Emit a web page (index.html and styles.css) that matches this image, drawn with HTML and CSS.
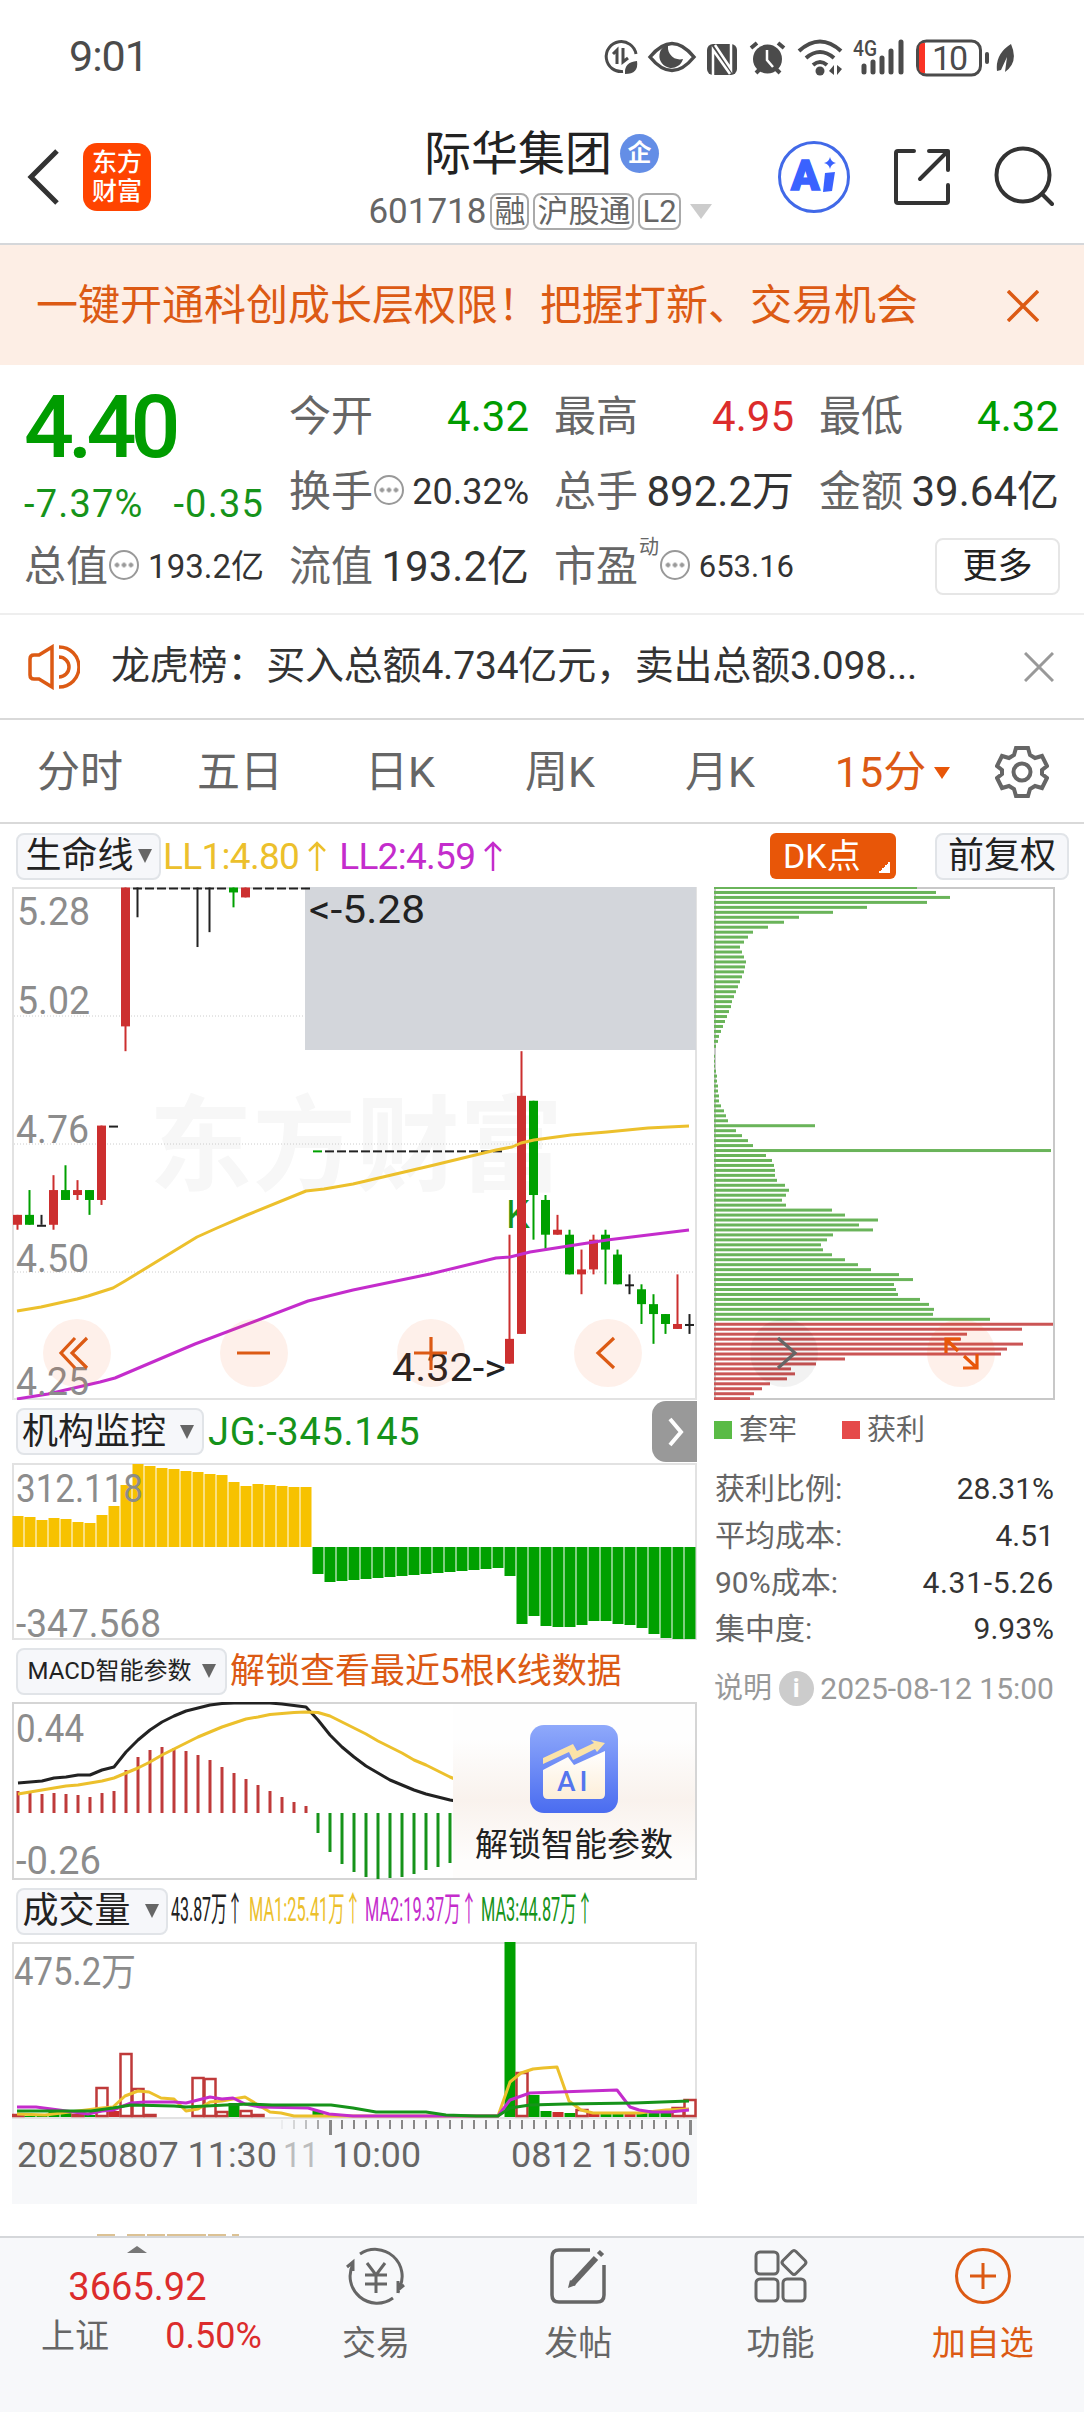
FILE: index.html
```html
<!DOCTYPE html>
<html lang="zh-CN">
<head>
  <meta charset="UTF-8">
  <meta name="viewport" content="width=device-width, initial-scale=1">
  <title>际华集团 601718</title>
  <link rel="stylesheet" href="styles.css">
</head>
<body>
  <div class="status-bar">
    <span class="time">9:01</span>
    <svg class="status-icons" width="414" height="40" viewBox="0 0 414 40">
      <g fill="none" stroke="#4b4b4b" stroke-width="3">
        <path d="M20 34.500A15 15 0 1 1 33 17"/>
        <path d="M10 17l4-4v14M20 11v14l5-4"/>
        <path d="M47 20Q69-7 91 20Q69 47 47 20z" stroke-width="3.500"/>
        <path d="M148 11l6-5M181 11l-6-5M153 36l5-5M177 36l-5-5" stroke-width="4"/>
        <path d="M196 14q21-19 42 0M203 21q14-12 28 0M210 28q7-6 14 0" stroke-width="4"/>
        <path d="M261 29v6M270 25v10M279 21v14M288 14v21M298 5v30" stroke-width="5" stroke-linecap="round"/>
        <rect x="314.500" y="4" width="63" height="34" rx="9"/>
        <path d="M384 17v8" stroke-width="4" stroke-linecap="round"/>
      </g>
      <g fill="#4b4b4b">
        <path d="M22 37q-1-12 12-13q2 13-12 13z"/>
        <path d="M69 7a12 12 0 1 0 11 15a12 12 0 0 1-15-13z"/>
        <rect x="104" y="7" width="30" height="31" rx="6"/>
        <circle cx="164.500" cy="22" r="14.500"/>
        <circle cx="217" cy="34" r="4.500"/>
        <path d="M226 34l5-6v10zM239 32l-5 6V28z"/>
        <path d="M394 34q-2-17 14-27q8 18-6 28l2-15l-6 13z"/>
      </g>
      <g fill="none" stroke="#fff" stroke-width="2.500">
        <path d="M110 38V13l17 24M128 7v25L112 8"/>
        <path d="M164 13v10l6 7"/>
      </g>
      <path d="M322 6h-1q-5 0-5 5v20q0 5 5 5h1z" fill="#fa3325"/>
      <text x="329" y="33" class="battery-text">10</text>
      <text x="250" y="19" class="network-text" textLength="24" lengthAdjust="spacingAndGlyphs">4G</text>
    </svg>
  </div>

  <header class="header">
    <div class="header-left">
      <svg width="34" height="58" viewBox="0 0 34 58"><path d="M31 3L5 29l26 26" fill="none" stroke="#333" stroke-width="5"/></svg>
      <div class="logo">东方<br>财富</div>
    </div>
    <div class="header-title">
      <h1>际华集团<span class="badge">企</span></h1>
      <div class="sub">
        <span class="code">601718</span><span class="tag">融</span><span class="tag">沪股通</span><span class="tag">L2</span><span class="caret light"></span>
      </div>
    </div>
    <div class="header-right">
      <svg width="72" height="72" viewBox="0 0 72 72">
        <circle cx="36" cy="36" r="34.500" fill="none" stroke="#4169e8" stroke-width="3"/>
        <text x="13" y="49" class="ai-text">A</text>
        <path d="M47 32l10-1-3 19-9 1z" fill="#3a62ff"/>
        <path d="M52 16q1 5 6 6-5 1-6 6-1-5-6-6 5-1 6-6z" fill="#3a62ff"/>
      </svg>
      <svg width="58" height="58" viewBox="0 0 58 58" fill="none" stroke="#333" stroke-width="4" stroke-linecap="round" stroke-linejoin="round">
        <path d="M21 3H5q-2 0-2 2v48q0 2 2 2h48q2 0 2-2V37M36 3h19v19M55 3L27 31"/>
      </svg>
      <svg width="60" height="62" viewBox="0 0 60 62" fill="none" stroke="#333" stroke-width="4" stroke-linecap="round">
        <circle cx="29" cy="29" r="26.500"/><path d="M48 48l10 10"/>
      </svg>
    </div>
  </header>

  <div class="banner">
    <span>一键开通科创成长层权限！把握打新、交易机会</span>
    <svg width="32" height="32" viewBox="0 0 32 32"><path d="M1 1l30 30M31 1L1 31" stroke="#dc5a14" stroke-width="3.500"/></svg>
  </div>

  <section class="quote">
    <div class="price-box">
      <div class="price">4.40</div>
      <div class="change"><span>-7.37%</span><span>-0.35</span></div>
    </div>
    <div class="cell"><span>今开</span><b class="green">4.32</b></div>
    <div class="cell"><span>最高</span><b class="red">4.95</b></div>
    <div class="cell"><span>最低</span><b class="green">4.32</b></div>
    <div class="cell"><span>换手<i class="more-dot"></i></span><b class="mid">20.32%</b></div>
    <div class="cell"><span>总手</span><b>892.2万</b></div>
    <div class="cell"><span>金额</span><b>39.64亿</b></div>
    <div class="cell"><span>总值<i class="more-dot"></i></span><b class="small">193.2亿</b></div>
    <div class="cell"><span>流值</span><b>193.2亿</b></div>
    <div class="cell"><span>市盈<sup>动</sup><i class="more-dot"></i></span><b class="xsmall">653.16</b></div>
    <div class="cell end"><button class="more-btn">更多</button></div>
  </section>

  <div class="news">
    <svg width="52" height="46" viewBox="0 0 52 46" fill="none" stroke="#dc5a14" stroke-width="3.500">
      <path d="M24 3v40L11 35H6q-4 0-4-4V15q0-4 4-4h5zM31 13a10 10 0 0 1 0 20M31 3a20 20 0 0 1 0 40"/>
    </svg>
    <span class="news-text">龙虎榜：买入总额4.734亿元，卖出总额3.098...</span>
    <svg width="30" height="30" viewBox="0 0 30 30"><path d="M1 1l28 28M29 1L1 29" stroke="#999" stroke-width="3"/></svg>
  </div>

  <nav class="tabs">
    <span>分时</span><span>五日</span><span>日K</span><span>周K</span><span>月K</span>
    <span class="active">15分<i class="caret orange"></i></span>
    <svg width="54" height="54" viewBox="0 0 54 54" fill="none" stroke="#666" stroke-width="4">
      <path d="M21 3h12l2 7 5 3 7-2 5 10-5 4v4l5 4-5 10-7-2-5 3-2 7H21l-2-7-5-3-7 2-5-10 5-4v-4l-5-4 5-10 7 2 5-3z"/>
      <circle cx="27" cy="27" r="8.500"/>
    </svg>
  </nav>

  <main class="board">
    <div class="board-left">
      <div class="row">
        <button class="select s1">生命线<i class="caret"></i></button>
        <span class="ind yellow">LL1:4.80</span><svg class="arrow yellow" viewBox="0 0 20 32"><path d="M10 31V3M2 11l8-8 8 8"/></svg>
        <span class="ind purple gap">LL2:4.59</span><svg class="arrow purple" viewBox="0 0 20 32"><path d="M10 31V3M2 11l8-8 8 8"/></svg>
      </div>
      <svg id="kline" width="685" height="513" viewBox="0 0 685 513"></svg>

      <div class="row">
        <button class="select s2">机构监控<i class="caret"></i></button>
        <span class="ind green">JG:-345.145</span>
        <span class="side-tab"><svg width="16" height="30" viewBox="0 0 16 30"><path d="M2 2l11 13L2 28" fill="none" stroke="#fff" stroke-width="4"/></svg></span>
      </div>
      <svg id="jg" width="685" height="177" viewBox="0 0 685 177"></svg>

      <div class="row">
        <button class="select s3">MACD智能参数<i class="caret"></i></button>
        <span class="unlock">解锁查看最近5根K线数据</span>
      </div>
      <div class="macd">
        <svg id="macd" width="685" height="178" viewBox="0 0 685 178"></svg>
        <div class="lock-card">
          <svg width="88" height="88" viewBox="0 0 88 88">
            <defs>
              <linearGradient id="blue" x2="0" y2="1"><stop offset="0" stop-color="#8fa9fb"/><stop offset="1" stop-color="#4a6cf0"/></linearGradient>
              <linearGradient id="cream" x2="0" y2="1"><stop offset="0" stop-color="#fff"/><stop offset="1" stop-color="#fdeed8"/></linearGradient>
            </defs>
            <rect width="88" height="88" rx="14" fill="url(#blue)"/>
            <path d="M13 45l25-13 6 8 31-14v43q0 5-5 5H18q-5 0-5-5z" fill="url(#cream)"/>
            <path d="M13 33l30-14 4 7 17-8-3-3 14 3-8 9-2-3-22 11-4-8-26 12z" fill="#fbe3a8"/>
            <text x="27" y="66" class="card-ai">AI</text>
          </svg>
          <span>解锁智能参数</span>
        </div>
      </div>

      <div class="row">
        <button class="select s4">成交量<i class="caret"></i></button>
        <svg width="425" height="40" viewBox="0 0 425 40" class="ma-text">
          <text x="0" y="30" textLength="72" lengthAdjust="spacingAndGlyphs" fill="#222">43.87万↑</text>
          <text x="78" y="30" textLength="112" lengthAdjust="spacingAndGlyphs" fill="#ecc02c">MA1:25.41万↑</text>
          <text x="194" y="30" textLength="112" lengthAdjust="spacingAndGlyphs" fill="#c42ccc">MA2:19.37万↑</text>
          <text x="310" y="30" textLength="112" lengthAdjust="spacingAndGlyphs" fill="#16931a">MA3:44.87万↑</text>
        </svg>
      </div>
      <svg id="volume" width="685" height="262" viewBox="0 0 685 262"></svg>
    </div>

    <div class="board-right">
      <div class="row right">
        <button class="dk">DK点</button>
        <button class="select fq">前复权</button>
      </div>
      <svg id="chips" width="341" height="513" viewBox="0 0 341 513"></svg>
      <div class="legend"><i class="sq g"></i>套牢<i class="sq r"></i>获利</div>
      <dl class="stats">
        <div><dt>获利比例:</dt><dd>28.31%</dd></div>
        <div><dt>平均成本:</dt><dd>4.51</dd></div>
        <div><dt>90%成本:</dt><dd class="range">4.31-5.26</dd></div>
        <div><dt>集中度:</dt><dd>9.93%</dd></div>
      </dl>
      <div class="note"><span>说明</span><i>i</i><span class="date">2025-08-12 15:00</span></div>
    </div>
  </main>

  <div class="peek"><i></i><i></i><i></i><i></i><i></i><i></i></div>

  <footer class="bottom">
    <div class="index">
      <i class="caret up"></i>
      <div class="index-val">3665.92</div>
      <div class="index-row"><span>上证</span><b>0.50%</b></div>
    </div>
    <div class="item">
      <svg width="66" height="60" viewBox="0 0 66 60" fill="none" stroke="#666" stroke-width="3">
        <path d="M17 8a27 27 0 0 1 39 35l-1 4M61 39l-6 5v-9M50 52A27 27 0 0 1 10 18M4 21l6-5v9"/>
        <path d="M24 17l9 12 9-12M22 29h22M22 38h22M33 29v18"/>
      </svg>
      <span>交易</span>
    </div>
    <div class="item">
      <svg width="60" height="60" viewBox="0 0 60 60" fill="none" stroke="#666" stroke-width="3.500">
        <path d="M42 4H11q-7 0-7 7v38q0 7 7 7h38q7 0 7-7V19"/>
        <path d="M24 38L48 12" stroke-width="6"/><path d="M51 9l3-3" stroke-width="6"/><path d="M20 42l8-3-6-5z" fill="#666" stroke="none"/>
      </svg>
      <span>发帖</span>
    </div>
    <div class="item">
      <svg width="60" height="60" viewBox="0 0 60 60" fill="none" stroke="#666" stroke-width="3">
        <rect x="5" y="6" width="22" height="22" rx="4"/><rect x="5" y="33" width="22" height="22" rx="4"/><rect x="32" y="33" width="22" height="22" rx="4"/>
        <path d="M41 5.500q2-2 4 0l9 9q2 2 0 4l-9 9q-2 2-4 0l-9-9q-2-2 0-4z"/>
      </svg>
      <span>功能</span>
    </div>
    <div class="item active">
      <svg width="60" height="60" viewBox="0 0 60 60" fill="none" stroke="#dc5a14" stroke-width="3">
        <circle cx="30" cy="30" r="26.500"/><path d="M30 17v26M17 30h26"/>
      </svg>
      <span>加自选</span>
    </div>
  </footer>
  <script src="chart.js"></script>
</body>
</html>
```

FILE: styles.css
```css
* {
  box-sizing: border-box;
}

body {
  margin: 0;
  width: 1084px;
  height: 2412px;
  overflow: hidden;
  display: flex;
  flex-direction: column;
  background: #fff;
  color: #333;
  font-family: Roboto, "Noto Sans CJK SC", sans-serif;
  font-size: 42px;
  line-height: 1;
  font-weight: 400;
}

svg {
  display: block;
  flex: none;
}

svg text {
  font-family: Roboto, "Noto Sans CJK SC", sans-serif;
}

i {
  font-style: normal;
}

button {
  font: inherit;
  color: #222;
  padding: 0;
  white-space: nowrap;
}

.green { color: #009c00; }
.red { color: #dc2c2c; }

/* status bar */
.status-bar {
  height: 109px;
  padding: 4px 67px 0 69px;
  display: flex;
  align-items: center;
  justify-content: space-between;
}

.time {
  font-size: 43px;
  color: #4b4b4b;
  letter-spacing: -1px;
}

.battery-text {
  font-size: 34px;
  fill: #4b4b4b;
  letter-spacing: -2px;
}

.network-text {
  font-size: 22px;
  font-weight: 500;
  fill: #4b4b4b;
}

/* header */
.header {
  height: 136px;
  border-bottom: 2px solid #d5d7da;
  display: grid;
  grid-template-columns: 1fr auto 1fr;
  align-items: center;
  padding: 2px 30px 0 26px;
}

.header-left {
  display: flex;
  align-items: center;
  gap: 23px;
}

.logo {
  width: 68px;
  height: 68px;
  border-radius: 14px;
  background: #ff4400;
  color: #fff;
  font-size: 25px;
  line-height: 29px;
  font-weight: 500;
  text-align: center;
  padding-top: 5px;
}

.header-title {
  display: flex;
  flex-direction: column;
  align-items: center;
  padding-top: 4px;
}

h1 {
  margin: 0 0 14px;
  font-size: 47px;
  line-height: 50px;
  font-weight: 400;
  color: #222;
  display: flex;
  align-items: center;
  gap: 8px;
  padding-left: 3px;
}

.badge {
  width: 39px;
  height: 39px;
  border-radius: 50%;
  background: #648ee6;
  color: #fff;
  font-size: 24px;
  line-height: 38px;
  font-weight: 700;
  text-align: center;
}

.sub {
  display: flex;
  align-items: center;
  gap: 4px;
  font-size: 35px;
  color: #666;
}

.tag {
  border: 2px solid #aaa;
  border-radius: 8px;
  height: 37px;
  padding: 0 2px;
  font-size: 31px;
  line-height: 33px;
}

.caret {
  width: 0;
  height: 0;
  border: 7px solid transparent;
  border-top: 14px solid #666;
  border-bottom: 0;
  display: inline-block;
}

.caret.light {
  border-width: 15px 11px 0;
  border-top-color: #ccc;
  margin-left: 5px;
}

.caret.orange {
  border-width: 12px 8px 0;
  border-top-color: #e85608;
  margin: 0 0 8px 8px;
}

.caret.up {
  border: 10px solid transparent;
  border-bottom: 7px solid #777;
  border-top: 0;
}

.header-right {
  display: flex;
  align-items: center;
  justify-content: flex-end;
  gap: 43px;
}

.ai-text {
  font-size: 42px;
  font-weight: 900;
  fill: #3a62ff;
  stroke: #3a62ff;
  stroke-width: 1.5px;
}

/* banner */
.banner {
  height: 120px;
  background: #fdeee5;
  color: #dc5a14;
  display: flex;
  align-items: center;
  justify-content: space-between;
  padding: 2px 45px 0 36px;
}

/* quote */
.quote {
  height: 250px;
  padding: 14px 24px 0 24px;
  border-bottom: 2px solid #eee;
  display: grid;
  grid-template-columns: repeat(4, 240px);
  grid-template-rows: repeat(3, 75px);
  column-gap: 25px;
}

.price-box {
  grid-row: span 2;
}

.price {
  font-size: 88px;
  line-height: 88px;
  font-weight: 500;
  letter-spacing: -6px;
  color: #009c00;
  padding-top: 4px;
  height: 106px;
}

.change {
  display: flex;
  justify-content: space-between;
  font-size: 38px;
  letter-spacing: 1.2px;
  color: #16931a;
}

.cell {
  display: flex;
  align-items: center;
  justify-content: space-between;
  white-space: nowrap;
}

.cell span {
  color: #666;
  display: flex;
  align-items: center;
}

.cell b {
  font-weight: 400;
}

.cell .mid { font-size: 36px; }
.cell .small { font-size: 33px; }
.cell .xsmall { font-size: 31px; }

.cell.end {
  justify-content: flex-end;
}

.cell.end .more-btn {
  margin-right: -1px;
}

.cell sup {
  font-size: 20px;
  align-self: flex-start;
  margin: -9px 0 0 1px;
}

.more-dot {
  width: 30px;
  height: 30px;
  margin: -4px 0 0 1px;
  border: 2px solid #999;
  border-radius: 50%;
  background: radial-gradient(circle, #999 2px, transparent 2.5px) center / 7px 7px content-box;
  padding: 9px 2px;
}

.more-btn {
  width: 125px;
  height: 57px;
  background: #fff;
  border: 2px solid #e6e6e6;
  border-radius: 8px;
  font-size: 35px;
}

/* news */
.news {
  height: 105px;
  border-bottom: 2px solid #d9d9d9;
  display: flex;
  align-items: center;
  padding: 0 30px 0 28px;
}

.news-text {
  flex: 1;
  margin-left: 31px;
  font-size: 39px;
  letter-spacing: -.2px;
}

/* tabs */
.tabs {
  height: 104px;
  border-bottom: 2px solid #d9d9d9;
  display: flex;
  align-items: center;
  color: #666;
  font-size: 43px;
  padding-top: 2px;
}

.tabs span {
  width: 160px;
  text-align: center;
}

.tabs .active {
  width: 185px;
  color: #dc5a14;
}

.tabs svg {
  margin-left: 10px;
}

/* board */
.board {
  height: 1411px;
  display: flex;
  gap: 17px;
  padding: 1px 0 0 12px;
}

.board-left {
  width: 685px;
}

.board-right {
  width: 355px;
}

.row {
  height: 62px;
  display: flex;
  align-items: center;
}

#kline + .row {
  height: 63px;
}

.select {
  height: 47px;
  margin-left: 4px;
  border: 2px solid #e1e4e8;
  border-radius: 8px;
  background: #f6f7fa;
  font-size: 36px;
  display: flex;
  align-items: center;
  justify-content: center;
  flex: none;
}

.s1 { width: 145px; gap: 4px; }
.s2 { width: 188px; gap: 14px; padding-right: 4px; }
.s3 { width: 211px; gap: 10px; font-size: 24px; }
.s4 { width: 152px; gap: 14px; padding-right: 3px; }
.fq { width: 134px; margin: 0; }

.ind {
  font-size: 37px;
  letter-spacing: -.7px;
  margin-left: 2px;
}

.gap { margin-left: 12px; }
.yellow { color: #ecc02c; stroke: #ecc02c; }
.purple { color: #c42ccc; stroke: #c42ccc; }
.ind.yellow, .ind.purple { stroke: none; }
.ind.green { margin-left: 4px; color: #16931a; font-size: 38px; letter-spacing: .7px; }

.arrow {
  width: 20px;
  height: 34px;
  margin-left: 8px;
  fill: none;
  stroke-width: 2.5;
}

.side-tab {
  width: 45px;
  height: 61px;
  margin-left: auto;
  background: #999;
  border-radius: 14px 0 0 14px;
  display: flex;
  align-items: center;
  padding-left: 16px;
}

.unlock {
  margin-left: 3px;
  font-size: 35px;
  color: #dc5a14;
}

.macd {
  position: relative;
}

.lock-card {
  position: absolute;
  top: 2px;
  right: 2px;
  width: 242px;
  height: 174px;
  background: linear-gradient(#fefefe 20%, #f9f2ed 55%, #fefdfc 90%);
  display: flex;
  flex-direction: column;
  align-items: center;
  padding-top: 21px;
  font-size: 33px;
  color: #222;
  gap: 15px;
}

.card-ai {
  font-size: 28px;
  font-weight: 500;
  letter-spacing: 4px;
  fill: #5575ee;
}

.ma-text {
  margin-left: 3px;
  font-size: 34px;
}

.right {
  justify-content: flex-end;
  gap: 39px;
}

.dk {
  width: 126px;
  height: 46px;
  border: 0;
  border-radius: 6px;
  background: linear-gradient(135deg, transparent 50%, #fff 50%) 108px 28px / 12px 12px no-repeat, #e85608;
  color: #fff;
  font-size: 34px;
  text-align: left;
  padding-left: 13px;
}

.legend {
  display: flex;
  align-items: center;
  height: 60px;
  font-size: 29px;
  color: #666;
}

.sq {
  width: 18px;
  height: 18px;
  margin-right: 7px;
}

.sq.g { background: #5abb46; }
.sq.r { background: #e54a4a; margin-left: 45px; }

.stats {
  margin: 6px 0 0 1px;
  width: 339px;
  font-size: 30px;
}

.stats div {
  display: flex;
  justify-content: space-between;
  align-items: center;
  height: 46.7px;
}

.stats dt { color: #666; }
.stats dd { margin: 0; }
.stats .range { letter-spacing: .7px; }

.note {
  width: 340px;
  margin-top: 18px;
  height: 36px;
  display: flex;
  align-items: center;
  justify-content: space-between;
  font-size: 29px;
  color: #999;
}

.note i {
  width: 35px;
  height: 35px;
  border-radius: 50%;
  background: #ccc;
  color: #fff;
  font-weight: 700;
  font-size: 26px;
  line-height: 35px;
  text-align: center;
}

.note .date {
  font-size: 30px;
}

/* top edge of the block under the toolbar */
.peek {
  height: 2px;
  margin-top: -1px;
  padding-left: 97px;
  display: flex;
  gap: 2px;
}

.peek i {
  width: 18px;
  background: #dcc294;
}

.peek i:nth-child(2) { margin-left: 10px; }
.peek i:nth-child(4) { width: 39px; }
.peek i:nth-child(6) { width: 7px; margin-left: 4px; }

/* bottom bar */
.bottom {
  flex: 1;
  border-top: 2px solid #d5d7da;
  background: #f7f8fa;
  display: flex;
  color: #666;
  font-size: 34px;
}

.index {
  width: 275px;
  display: flex;
  flex-direction: column;
  align-items: center;
  padding-top: 8px;
}

.index-val {
  font-size: 38px;
  margin-top: 15px;
  color: #dc2c2c;
}

.index-row {
  display: flex;
  align-self: stretch;
  justify-content: space-between;
  align-items: center;
  padding: 0 13px 0 41px;
  margin-top: 12px;
  height: 36px;
}

.index-row b {
  font-size: 36px;
  font-weight: 400;
  color: #dc2c2c;
}

.item {
  width: 202.4px;
  display: flex;
  flex-direction: column;
  align-items: center;
  padding-top: 8px;
  gap: 20px;
}

.item.active {
  color: #dc5a14;
}

/* chart text */
.axis { font-size: 38px; fill: #8c8c8c; }
.mark { font-size: 38px; fill: #222; }
.time-axis { font-size: 35px; fill: #666; }
.watermark { font-size: 104px; font-weight: 700; fill: #f7f7f7; }
```

FILE: chart.js
```js
const RED = '#cc2f2f';
const GREEN = '#00a000';
const BLACK = '#222';
const STEP = 12;

function rect(x, y, w, h, fill, extra = '') {
  return `<rect x="${x}" y="${y}" width="${w}" height="${h}" fill="${fill}" ${extra}/>`;
}

function line(points, color, width = 3) {
  return `<polyline points="${points}" fill="none" stroke="${color}" stroke-width="${width}" stroke-linejoin="round"/>`;
}

function text(x, y, str, cls, width) {
  const len = width ? `textLength="${width}" lengthAdjust="spacingAndGlyphs"` : '';
  return `<text x="${x}" y="${y}" class="${cls}" ${len}>${str}</text>`;
}

function frame(w, h, color = '#e2e2e2') {
  return rect(1, 1, w - 2, h - 2, 'none', `stroke="${color}" stroke-width="2"`);
}

function series(values) {
  return values.map((v, i) => `${6 + i * STEP},${v}`).join(' ');
}

function draw(id, html) {
  document.getElementById(id).innerHTML = html;
}

function circle(x, y, fill) {
  return `<circle cx="${x}" cy="${y}" r="34" fill="${fill}"/>`;
}

function stroke(d, color) {
  return `<path d="${d}" fill="none" stroke="${color}" stroke-width="3.2"/>`;
}

// candles: [open, close, high, low]
function flat(price, n) {
  return Array.from({ length: n }, () => [price, price, price, price]);
}

const candles = [
  [4.60, 4.62, 4.62, 4.59], [4.62, 4.60, 4.67, 4.60], [4.60, 4.60, 4.62, 4.60],
  [4.60, 4.67, 4.70, 4.59], [4.67, 4.65, 4.72, 4.65], [4.66, 4.67, 4.69, 4.65],
  [4.67, 4.65, 4.67, 4.62], [4.65, 4.80, 4.80, 4.64], [4.80, 4.80, 4.80, 4.80],
  [5.00, 5.28, 5.28, 4.95], [5.28, 5.28, 5.28, 5.22], ...flat(5.28, 4),
  [5.28, 5.28, 5.28, 5.16], [5.28, 5.28, 5.28, 5.19], ...flat(5.28, 1),
  [5.28, 5.27, 5.28, 5.24], [5.26, 5.28, 5.28, 5.26], ...flat(5.28, 5),
  ...flat(4.75, 16),
  [4.32, 4.37, 4.58, 4.32], [4.38, 4.86, 4.95, 4.38], [4.85, 4.66, 4.85, 4.57],
  [4.65, 4.58, 4.66, 4.55], [4.58, 4.59, 4.62, 4.58], [4.58, 4.50, 4.59, 4.50],
  [4.50, 4.51, 4.55, 4.46], [4.51, 4.57, 4.58, 4.50], [4.58, 4.55, 4.59, 4.48],
  [4.54, 4.48, 4.55, 4.48], [4.48, 4.48, 4.50, 4.46], [4.47, 4.44, 4.48, 4.40],
  [4.44, 4.42, 4.46, 4.36], [4.42, 4.40, 4.42, 4.38], [4.39, 4.40, 4.50, 4.39],
  [4.40, 4.40, 4.42, 4.38]
];

function priceY(p) {
  return 0.5 + (5.28 - p) * 496;
}

function drawKline() {
  let s = text(137, 296, '东方财富', 'watermark', 414);
  s += frame(685, 513);
  [129, 257, 385].forEach(y => {
    s += `<path d="M2 ${y}H683" stroke="#ccc" stroke-dasharray="1 2"/>`;
  });
  s += rect(293, 0, 391, 163, '#d3d6db');
  s += text(494, 341, 'K', 'mark').replace('<text', '<text style="fill:#16931a"');

  candles.forEach(([o, c, h, l], i) => {
    const x = 5.5 + i * STEP;
    const color = c > o ? RED : c < o || i === 25 ? GREEN : BLACK;
    const top = priceY(Math.max(o, c));
    const bodyH = Math.max(Math.abs(o - c) * 496, 2);
    if (h > l) s += rect(x - 1, priceY(h), 2, (h - l) * 496, color);
    s += rect(x - 4.5, top, 9, bodyH, color);
  });

  s += line('5,424 29,420 65,412 76,409 101,401 113,394 185,350 205,341 235,328 294,304 312,302 341,297 418,279 484,263 500,260 509,256 522,253 559,248 595,245 636,241 677,239', '#ecc02c');
  s += line('5,512 36,507 88,495 103,491 183,457 296,414 341,403 418,387 484,371 498,370 518,365 595,353 677,343', '#c42ccc');

  [[5, 38, '5.28'], [5, 127, '5.02'], [4, 256, '4.76'], [4, 385, '4.50'], [4, 508, '4.25']].forEach(([x, y, t]) => {
    s += text(x, y, t, 'axis', 73);
  });
  s += text(297, 36, '&lt;-5.28', 'mark', 116);
  s += text(380, 494, '4.32-&gt;', 'mark', 114);

  const pale = 'rgba(240, 90, 20, .09)';
  [65, 242, 419, 596].forEach(x => { s += circle(x, 466, pale); });
  s += stroke('M63 451L49 466l14 15M75 451L60 466l15 15', '#dc5a14');
  s += stroke('M225 466h33M402 466h33M419 450v33M602 451l-16 15 16 15', '#dc5a14');
  draw('kline', s);
}

const jgUp = [31, 30, 27, 29, 28, 25, 24, 32, 41, 62, 83, 81, 79, 78, 76, 75, 73, 72, 65, 61, 63, 62, 61, 60, 60];
const jgDown = [28, 36, 35, 34, 33, 32, 31, 30, 29, 28, 27, 26, 25, 24, 23, 22, 30, 78, 70, 80, 81, 81, 79, 75, 75, 78, 79, 82, 88, 92, 93, 93];

function drawJg() {
  let s = frame(685, 177);
  jgUp.forEach((h, i) => { s += rect(0.5 + i * STEP, 84 - h, 11, h, '#f7c200'); });
  jgDown.forEach((h, i) => { s += rect(0.5 + (i + 25) * STEP, 84, 11, h - 1, GREEN); });
  s += text(4, 39, '312.118', 'axis', 127);
  s += text(4, 174, '-347.568', 'axis', 145);
  draw('jg', s);
}

const macdUp = [22, 21, 19, 20, 19, 18, 16, 20, 22, 43, 56, 63, 66, 65, 62, 58, 53, 46, 40, 34, 28, 22, 16, 11, 7];
const macdDown = [20, 39, 51, 59, 64, 66, 65, 64, 61, 57, 54, 50];
const dif = [81, 80, 79, 76, 75, 73, 73, 68, 65, 50, 38, 28, 20, 14, 9, 6, 3, 1.5, 1, 1, 1, 1, 2, 3.5, 5, 18, 33, 45, 55, 64, 71, 78, 83, 88, 92, 95, 98, 100];
const dea = [92, 90, 88, 86, 84, 83, 81, 79, 76, 71, 66, 60, 53, 47, 41, 35, 30, 25, 21, 17, 15, 12.5, 11.5, 10.5, 10, 10.5, 14, 20, 26, 32, 39, 45, 51, 58, 63, 69, 75, 80];

function drawMacd() {
  let s = frame(685, 178, '#d5d5d5');
  macdUp.forEach((h, i) => { s += rect(4.5 + i * STEP, 111 - h, 3, h, '#bf3a3a'); });
  macdDown.forEach((h, i) => { s += rect(4.5 + (i + 25) * STEP, 111, 3, h, '#16931a'); });
  s += line(series(dif), BLACK);
  s += line(series(dea), '#ecc02c');
  s += text(4, 40, '0.44', 'axis', 68);
  s += text(4, 172, '-0.26', 'axis', 85);
  draw('macd', s);
}

// volume bars by candle index: height, g = filled green, r = hollow red, R = filled red
const volumes = {
  0: [2, 'r'], 1: [1, 'g'], 2: [1, 'g'], 3: [5, 'g'], 4: [5, 'g'], 5: [2, 'r'], 6: [2, 'g'], 7: [29, 'r'], 8: [6, 'R'],
  9: [63, 'r'], 10: [28, 'r'], 11: [2, 'r'], 12: [1, 'r'], 13: [1, 'r'], 14: [1, 'r'], 15: [39, 'r'], 16: [38, 'r'],
  17: [5, 'r'], 18: [14, 'g'], 19: [6, 'r'], 20: [2, 'r'], 25: [6, 'g'],
  41: [175, 'g'], 42: [44, 'r'], 43: [22, 'g'], 44: [6, 'g'], 45: [5, 'R'], 46: [4, 'g'], 47: [7, 'r'], 48: [4, 'R'],
  49: [3, 'g'], 50: [3, 'g'], 51: [3, 'R'], 52: [4, 'g'], 53: [7, 'g'], 54: [5, 'g'], 55: [9, 'r'], 56: [17, 'r']
};

function drawVolume() {
  let s = rect(0, 176, 685, 86, '#f7f8fa') + frame(685, 177);
  Object.entries(volumes).forEach(([i, [h, type]]) => {
    const x = 0.5 + i * STEP;
    if (type === 'r') {
      s += rect(x, 175 - h, 11, h - 1, h > 3 ? '#fff' : 'none', 'stroke="#bf3a3a" stroke-width="2.5"');
    } else {
      s += rect(x, 175 - h, 11, h, type === 'g' ? GREEN : RED);
    }
  });
  s += line('5,172 33,173 66,169 90,166 101,165 113,154 126,149 137,150 149,156 162,157 174,169 186,167 198,160 210,159 221,157 233,155 258,170 269,171 282,174 486,174 498,140 509,131 521,127 531,126 545,125 557,159 569,168 581,171 627,171 654,168 677,167', '#ecc02c');
  s += line('5,165 24,165 47,168 76,172 90,169 101,168 119,161 133,160 162,160 174,161 198,155 210,157 221,156 233,162 248,165 296,166 317,172 341,174 486,174 498,158 518,151 605,148 618,165 627,168 640,170 658,170 677,168', '#c42ccc');
  s += line('5,169 79,169 101,166 119,163 162,164 174,165 214,163 237,162 260,163 319,163 341,166 364,170 414,170 434,173 464,174 486,174 498,166 518,163 554,162 622,161 677,159', '#16931a');

  for (let j = -4; j <= 30; j++) {
    const big = j === 0 || j === 30;
    const opacity = j < 0 ? 0.9 + j * 0.2 : 1;
    s += rect(317 + j * STEP, 178, big ? 3 : 2, big ? 15 : 9, '#888', `opacity="${opacity}"`);
  }
  s += text(2, 43, '475.2万', 'axis', 122);
  s += text(5, 225, '20250807 11:30', 'time-axis', 260);
  s += text(271, 225, '11', 'time-axis', 36).replace('<text', '<text opacity=".4"');
  s += text(320, 225, '10:00', 'time-axis', 89);
  s += text(499, 225, '0812 15:00', 'time-axis', 180);
  draw('volume', s);
}

const chipGreen = [203, 222, 236, 213, 153, 119, 85, 70, 54, 39, 34, 30, 26, 28, 30, 32, 31, 30, 28, 26, 24, 22, 20, 18, 17, 15, 13, 11, 9, 7, 5, 4, 2, 0, 1, 1, 1, 2, 3, 3, 4, 4, 5, 5, 7, 10, 12, 14, 101, 22, 28, 34, 39, 337, 52, 58, 60, 61, 61, 63, 71, 75, 72, 68, 72, 118, 131, 164, 145, 159, 119, 113, 107, 109, 118, 131, 144, 157, 185, 199, 180, 182, 184, 206, 215, 220, 219, 276];
const chipRed = [339, 308, 253, 247, 309, 293, 287, 131, 102, 77, 81, 73, 56, 48, 40, 36];

function drawChips() {
  let s = frame(341, 513, '#c8c8c8');
  [...chipGreen, ...chipRed].forEach((w, i) => {
    s += rect(0, i * 4.963 - 1, w, 3, i < chipGreen.length ? '#6ab45a' : '#cb5555');
  });
  s += circle(70, 466, 'rgba(0, 0, 0, .05)') + circle(247, 466, 'rgba(240, 90, 20, .09)');
  s += stroke('M64 451l17 15-17 15', '#666');
  s += stroke('M244 464l-12-12M232 466v-14h14M250 469l13 12M263 467v14h-14', '#e85608');
  draw('chips', s);
}

drawKline();
drawJg();
drawMacd();
drawVolume();
drawChips();
```
